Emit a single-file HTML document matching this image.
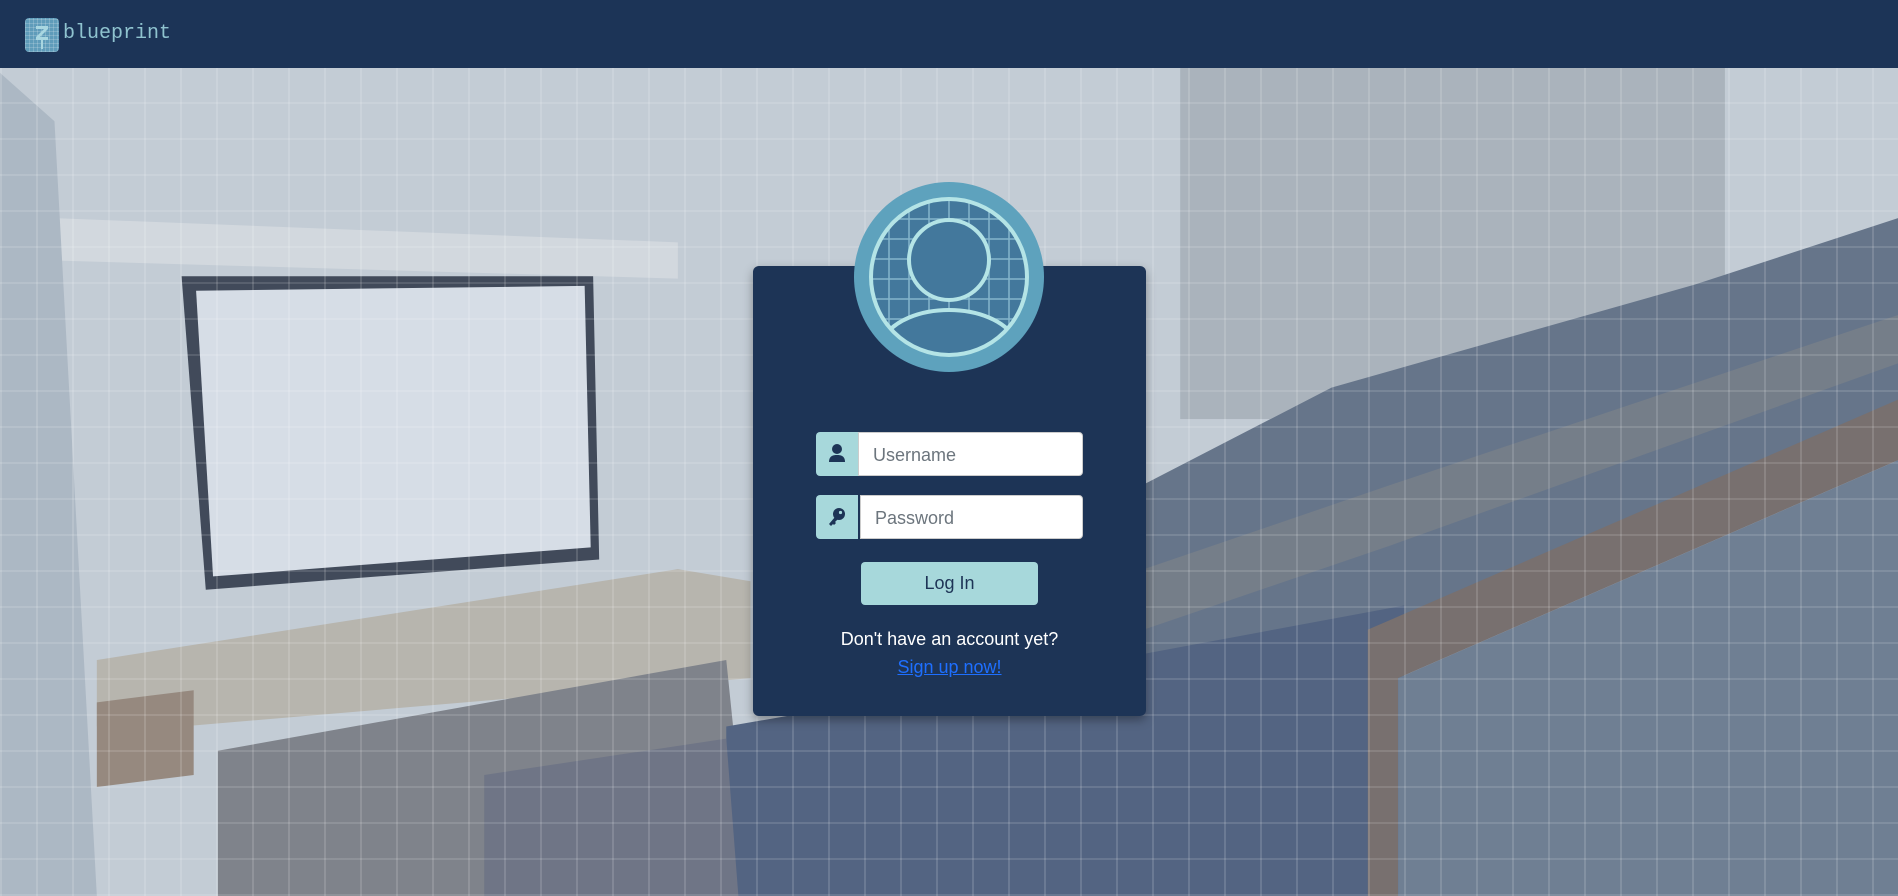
<!DOCTYPE html>
<html><head><meta charset="utf-8"><style>
*{margin:0;padding:0;box-sizing:border-box}
body{width:1898px;height:896px;overflow:hidden;font-family:"Liberation Sans",sans-serif;position:relative;background:#bfc9d3}
.hdr{position:absolute;left:0;top:0;width:1898px;height:68px;background:#1c3457;z-index:5}
.logo{position:absolute;left:25px;top:18px;width:34px;height:34px;border-radius:4px;background:#5f9cba;
background-image:repeating-linear-gradient(0deg,rgba(255,255,255,.18) 0 1px,transparent 1px 4px),repeating-linear-gradient(90deg,rgba(255,255,255,.18) 0 1px,transparent 1px 4px);}
.brand{position:absolute;left:63px;top:22px;font-family:"Liberation Mono",monospace;font-size:20px;color:#8fc3cf}
.bg{position:absolute;left:0;top:68px;width:1898px;height:828px}
.grid{position:absolute;left:0;top:68px;width:1898px;height:828px;
background-image:repeating-linear-gradient(90deg,rgba(255,255,255,.14) 0 2px,transparent 2px 36px),repeating-linear-gradient(0deg,rgba(255,255,255,.12) 0 2px,transparent 2px 36px);}
.card{position:absolute;left:753px;top:266px;width:393px;height:450px;background:#1d3456;border-radius:6px;box-shadow:0 4px 10px rgba(0,0,0,.35)}
.av{position:absolute;left:854px;top:182px;width:190px;height:190px;border-radius:50%;background:#5ea2bd}
.grp{position:absolute;left:816px;width:267px;height:44px}
.ic{position:absolute;left:0;top:0;width:42px;height:44px;background:#a7d8db;border-radius:4px 0 0 4px}
.in{position:absolute;left:42px;top:0;right:0;height:44px;background:#fff;border-radius:0 4px 4px 0;border:1px solid #ccc;font-size:18px;color:#6c757d;padding:12px 0 0 14px}
.btn{position:absolute;left:861px;top:562px;width:177px;height:43px;background:#a7d8db;border-radius:4px;text-align:center;font-size:18px;line-height:43px;color:#1d3456}
.t1{position:absolute;left:753px;width:393px;top:629px;text-align:center;color:#fff;font-size:18px}
.t2{position:absolute;left:753px;width:393px;top:657px;text-align:center;color:#1e6fff;font-size:18px;text-decoration:underline}
</style></head><body>
<svg class="bg" viewBox="0 56 1568 684" preserveAspectRatio="none">
<rect x="0" y="56" width="1568" height="684" fill="#c3ccd5"/>
<rect x="975" y="56" width="450" height="290" fill="#aab3bc"/>
<polygon points="45,180 560,200 560,230 45,215" fill="#d2d8de"/>
<polygon points="0,60 45,100 80,740 0,740" fill="#acb8c4"/>
<polygon points="150,228 490,228 495,462 170,487" fill="#414a5a"/>
<polygon points="162,240 483,236 488,452 176,476" fill="#d6dde6"/>
<polygon points="80,545 560,470 620,480 620,560 150,600 80,600" fill="#b7b5ae"/>
<polygon points="80,580 160,570 160,640 80,650" fill="#96897f"/>
<polygon points="180,620 600,545 620,740 180,740" fill="#7f838b"/>
<polygon points="945,400 1100,320 1400,235 1568,180 1568,380 1150,530 945,580" fill="#66758a"/>
<polygon points="945,470 1150,400 1568,260 1568,300 1150,450 945,520" fill="#7f8388" opacity=".6"/>
<polygon points="600,600 945,540 1160,500 1160,740 600,740" fill="#536482"/>
<polygon points="1130,520 1568,330 1568,380 1155,560 1155,740 1130,740" fill="#78706f"/>
<polygon points="1155,560 1568,380 1568,740 1155,740" fill="#6f7f93"/>
<polygon points="400,640 600,610 610,740 400,740" fill="#6f7586"/>
</svg>
<div class="grid"></div>
<div class="hdr"><div class="logo"><svg width="34" height="34" viewBox="0 0 34 34"><path d="M11 8h12v3l-8 8h8v3H11v-3l8-8h-8z" fill="#a8d6e0"/><path d="M17 22v9" stroke="#a8d6e0" stroke-width="2"/></svg></div><div class="brand">blueprint</div></div>
<div class="card"></div>
<div class="av"><svg width="190" height="190" viewBox="0 0 190 190">
<defs><clipPath id="c"><circle cx="95" cy="95" r="78"/></clipPath></defs>
<circle cx="95" cy="95" r="78" fill="#43789c"/>
<g clip-path="url(#c)" stroke="#8dbdd2" stroke-width="1.5" opacity=".9">
<path d="M17 37H173M17 57H173M17 77H173M17 97H173M17 117H173M17 137H173M17 157H173M35 17V173M55 17V173M75 17V173M95 17V173M115 17V173M135 17V173M155 17V173"/></g>
<g clip-path="url(#c)"><path d="M28 158 C50 118 140 118 162 158 L170 190 L20 190Z" fill="#43789c" stroke="#b4e4e6" stroke-width="4"/></g>
<circle cx="95" cy="95" r="78" fill="none" stroke="#b4e4e6" stroke-width="4"/>
<circle cx="95" cy="78" r="40" fill="#43789c" stroke="#b4e4e6" stroke-width="4"/>
</svg></div>
<div class="grp" style="top:432px"><div class="ic"><svg width="42" height="44" viewBox="0 0 42 44"><circle cx="21" cy="17" r="5" fill="#1d3456"/><path d="M13 30c0-6 4-7 8-7s8 1 8 7z" fill="#1d3456"/></svg></div><div class="in">Username</div></div>
<div class="grp" style="top:495px"><div class="ic"><svg width="42" height="44" viewBox="0 0 42 44"><circle cx="23" cy="19" r="6" fill="#1d3456"/><circle cx="24.5" cy="17.5" r="1.6" fill="#a7d8db"/><path d="M19 22l-6 7 2 2 2-2 1 1 2-2-1-1 3-3z" fill="#1d3456"/></svg></div><div class="in" style="left:44px">Password</div></div>
<div class="btn">Log In</div>
<div class="t1">Don't have an account yet?</div>
<div class="t2">Sign up now!</div>
</body></html>
